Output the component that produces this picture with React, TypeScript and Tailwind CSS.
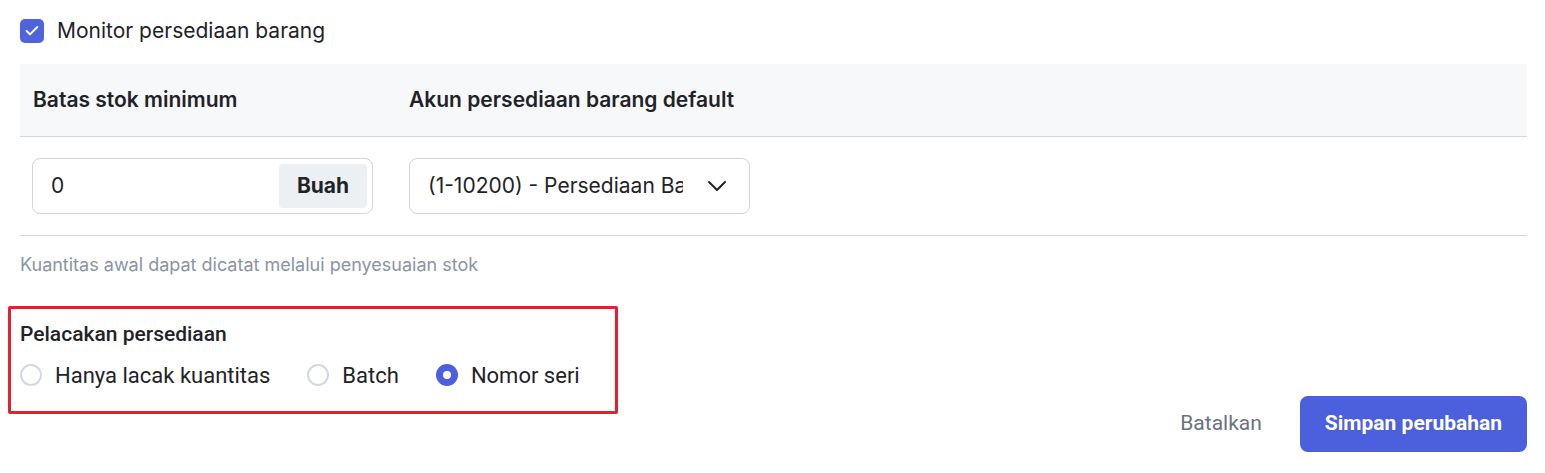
import { Check, ChevronDown } from "lucide-react";

function Radio({ label, checked }: { label: string; checked?: boolean }) {
  return (
    <label className="flex items-center gap-[13px]">
      {checked ? (
        <span className="flex h-[22px] w-[22px] items-center justify-center rounded-full bg-[#4c60dd]">
          <span className="h-[8px] w-[8px] rounded-full bg-white" />
        </span>
      ) : (
        <span className="h-[22px] w-[22px] rounded-full border-2 border-[#d3d8e0] bg-white" />
      )}
      <span className="text-[22px] text-[#1f2328]">{label}</span>
    </label>
  );
}

export default function App() {
  return (
    <div className="min-h-[473px] bg-white pl-[20px] pr-[18px] pt-[19px] text-[#1f2328] [font-family:Inter,'Noto_Sans',sans-serif]">
      <label className="flex items-center gap-[13px]">
        <span className="flex h-[24px] w-[24px] items-center justify-center rounded-[5px] bg-[#4f63dc]">
          <Check className="h-[16px] w-[16px] text-white" strokeWidth={3} />
        </span>
        <span className="text-[21px] leading-[24px]">Monitor persediaan barang</span>
      </label>

      <div className="mt-[21px]">
        <div className="grid h-[73px] grid-cols-[341px_341px] items-center gap-x-9 border-b border-[#d1d5db] bg-[#f7f8fa] px-3">
          <div className="pl-px text-[21px] font-semibold">Batas stok minimum</div>
          <div className="text-[21px] font-semibold">Akun persediaan barang default</div>
        </div>
        <div className="grid grid-cols-[341px_341px] gap-x-9 border-b border-[#d1d5db] px-3 pb-[21px] pt-[21px]">
          <div className="flex h-[56px] items-center rounded-lg border border-[#d1d5db] py-[5px] pl-[18px] pr-[5px]">
            <span className="flex-1 text-[21px]">0</span>
            <span className="flex h-full w-[88px] items-center justify-center rounded bg-[#edf0f3] text-[21px] font-bold">
              Buah
            </span>
          </div>
          <div className="flex h-[56px] items-center rounded-lg border border-[#d1d5db] pl-[18px] pr-[16px]">
            <span className="w-[255px] overflow-hidden whitespace-nowrap text-[21px]">
              (1-10200) - Persediaan Barang
            </span>
            <ChevronDown className="ml-auto h-[32px] w-[32px] text-[#1f2328]" strokeWidth={1.5} />
          </div>
        </div>
        <p className="mt-[15px] text-[18px] text-[#8a94a3]">Kuantitas awal dapat dicatat melalui penyesuaian stok</p>
      </div>

      <div className="-ml-[12px] mt-[28px] flex items-start justify-between [font-family:Roboto,'Liberation_Sans',sans-serif]">
        <div className="h-[108px] w-[610px] rounded-[2px] border-[3px] border-[#e5202e] pl-[9px] pt-[10px]">
          <div className="text-[21px] font-medium">Pelacakan persediaan</div>
          <div className="mt-[8px] flex items-center gap-[37px]">
            <Radio label="Hanya lacak kuantitas" />
            <Radio label="Batch" />
            <Radio label="Nomor seri" checked />
          </div>
        </div>
        <div className="mt-[90px] flex items-center gap-[38px]">
          <button className="text-[21px] text-[#6b7280]">Batalkan</button>
          <button className="h-[56px] rounded-lg bg-[#4c60dd] px-[25px] text-[21px] font-bold text-white">
            Simpan perubahan
          </button>
        </div>
      </div>
    </div>
  );
}
